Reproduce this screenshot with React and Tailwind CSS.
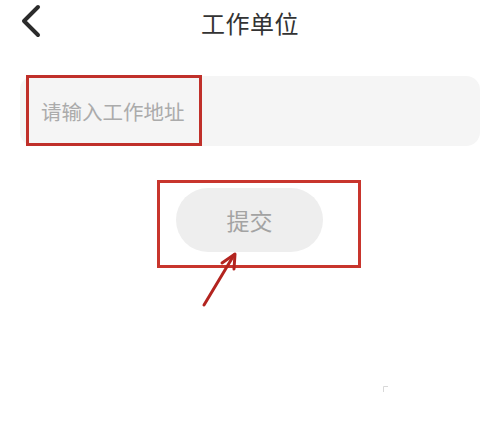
export default function App() {
  return (
    <div
      className="relative w-[500px] h-[429px] bg-white overflow-hidden"
      style={{ fontFamily: '"Noto Sans CJK SC", "Noto Sans", sans-serif' }}
    >
      <header className="grid grid-cols-[1fr_auto_1fr] items-center h-[46px]">
        <div className="pl-[19px] flex items-center">
          <svg width="24" height="34" viewBox="0 0 24 34" className="mt-[-4px]">
            <path d="M19 3 L5 17 L19 31" fill="none" stroke="#2b2b2b" strokeWidth="4" strokeLinecap="round" strokeLinejoin="round" />
          </svg>
        </div>
        <h1 className="text-[24px] leading-none text-[#333333] tracking-[0.5px] mt-[-1px]">工作单位</h1>
        <div />
      </header>

      <div className="px-[20px] mt-[30px]">
        <div className="relative h-[70px] rounded-[14px] bg-[#f5f5f5] flex items-center pl-[21px]">
          <span className="text-[20.5px] leading-none text-[#ababab]">请输入工作地址</span>
          <div className="absolute left-[6px] top-[-1px] w-[176px] h-[71px] border-[3px] border-[#c0302a]" />
        </div>
      </div>

      <div className="flex justify-center mt-[42px]">
        <div className="relative ml-[-1px]">
          <button className="w-[147px] h-[64px] rounded-full bg-[#eeeeee] text-[23px] leading-none text-[#a3a3a3] flex items-center justify-center">
            提交
          </button>
          <div className="absolute left-[-19px] top-[-8px] w-[204px] h-[88px] border-[3px] border-[#c8352d]" />
          <svg className="absolute left-[22px] top-[62px]" width="40" height="62" viewBox="0 0 40 62">
            <path d="M6 55 L36 5" stroke="#b3241f" strokeWidth="3" strokeLinecap="round" fill="none" />
            <path d="M24 13 L37 4 L36 19" stroke="#b3241f" strokeWidth="3" strokeLinecap="round" strokeLinejoin="round" fill="none" />
          </svg>
        </div>
      </div>

      <svg className="absolute left-[383px] top-[386px]" width="6" height="6" viewBox="0 0 6 6">
        <path d="M0.5 6 V0.5 H5" stroke="#d8d8d8" strokeWidth="1" fill="none" />
      </svg>
    </div>
  );
}
